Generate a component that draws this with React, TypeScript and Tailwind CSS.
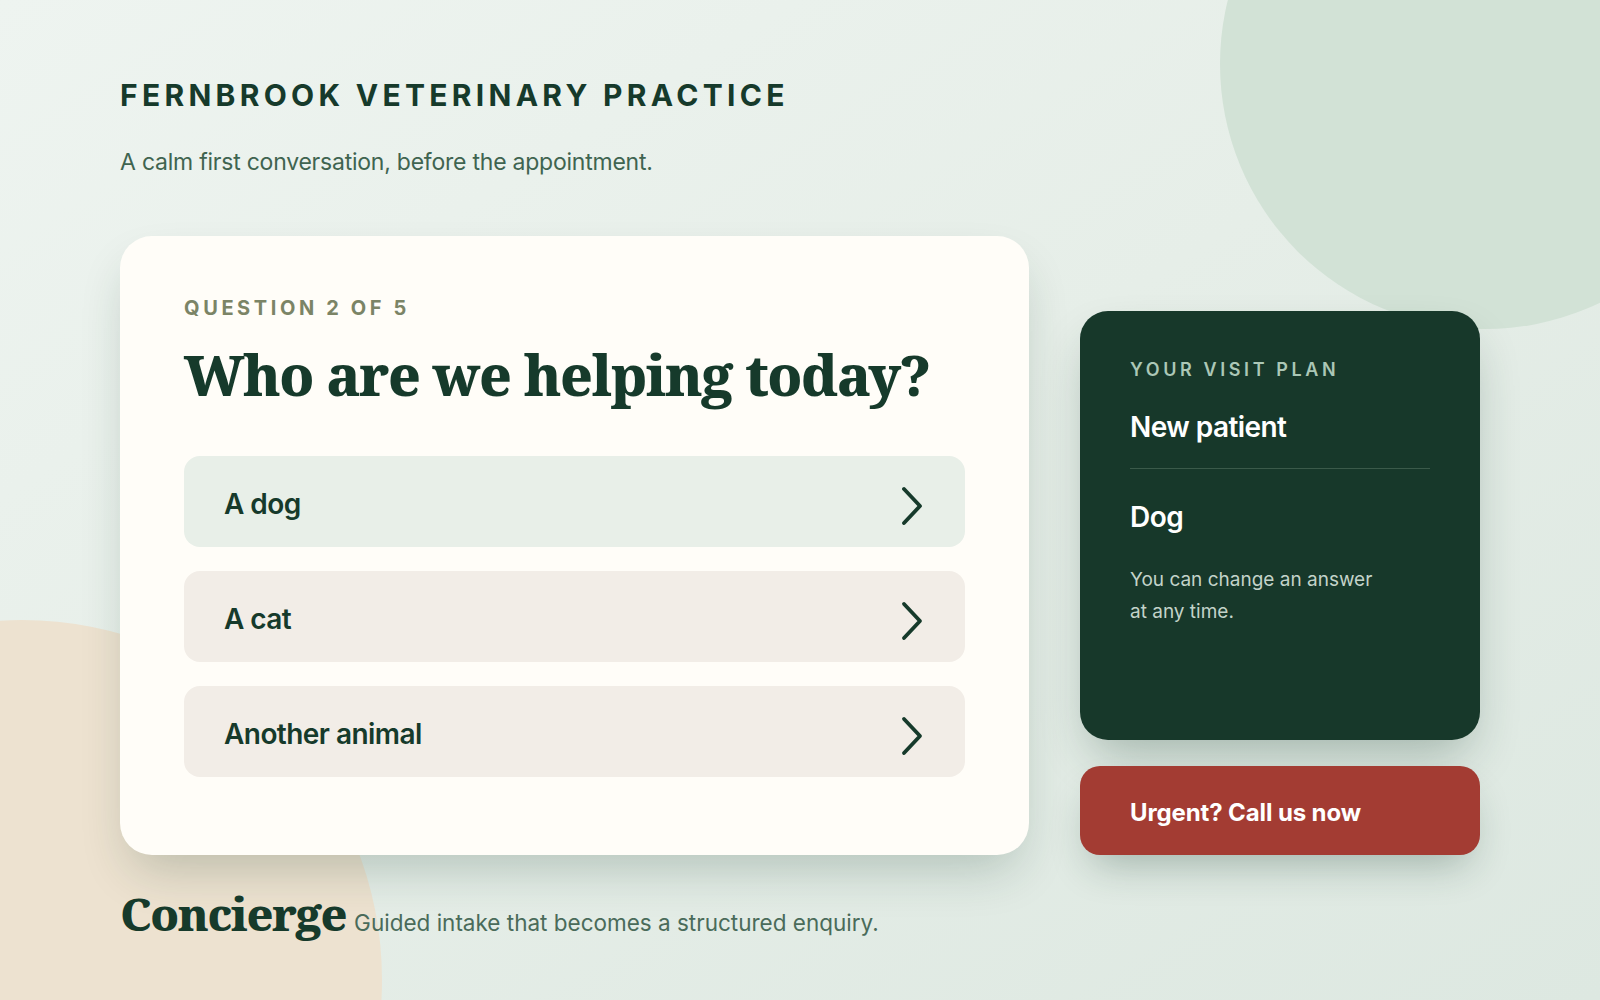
import React from 'react';

const sans = { fontFamily: 'Inter, "Noto Sans", sans-serif' };
const serif = { fontFamily: '"Noto Serif", "Liberation Serif", serif' };

const options = [
  { label: 'A dog', selected: true },
  { label: 'A cat', selected: false },
  { label: 'Another animal', selected: false },
];

const Chevron: React.FC = () => (
  <svg width="26" height="42" viewBox="0 0 26 42" fill="none" aria-hidden="true" className="mt-[9px]">
    <path d="M5 4 L21 21 L5 38" stroke="#163a2b" strokeWidth="3.8" strokeLinecap="round" strokeLinejoin="round" />
  </svg>
);

const App: React.FC = () => {
  return (
    <div
      className="relative w-full h-[1000px] overflow-hidden bg-gradient-to-br from-[#eef4f0] via-[#e6eee8] to-[#dde8e1] text-[#163a2b]"
      style={sans}
    >
      {/* Decorative blobs */}
      <div className="absolute left-[1220px] top-[-201px] w-[530px] h-[530px] rounded-full bg-[#d2e2d6]" />
      <div className="absolute left-[-338px] top-[620px] w-[720px] h-[720px] rounded-full bg-[#ede2d0]" />

      <div className="relative px-[120px] pt-[80px]">
        {/* Header */}
        <h1 className="text-[30px] leading-[30px] font-bold tracking-[0.143em] text-[#163a2b]">
          FERNBROOK VETERINARY PRACTICE
        </h1>
        <p className="mt-[36px] text-[23px] leading-[32px] tracking-[-0.01em] text-[#3f6450]">
          A calm first conversation, before the appointment.
        </p>

        {/* Main grid */}
        <div className="mt-[58px] grid grid-cols-[1fr_400px] gap-[51px] items-end">
          {/* Question card */}
          <div className="rounded-[32px] bg-[#fffdf8] pt-[60px] pb-[78px] px-16 shadow-[0_24px_50px_-12px_rgba(22,58,43,0.24)]">
            <div className="text-[20px] leading-[24px] font-bold tracking-[0.18em] text-[#7b8466]">
              QUESTION 2 OF 5
            </div>
            <h2
              className="mt-[22px] whitespace-nowrap text-[56px] leading-[64px] font-extrabold tracking-[-0.026em] text-[#163a2b]"
              style={serif}
            >
              Who are we helping today?
            </h2>
            <div className="mt-[50px] flex flex-col gap-6">
              {options.map((o) => (
                <button
                  key={o.label}
                  className={`flex items-center justify-between h-[91px] rounded-2xl pl-10 pr-[40px] text-left ${
                    o.selected ? 'bg-[#e8efe8]' : 'bg-[#f2ede7]'
                  }`}
                >
                  <span className="pt-[4px] text-[28px] font-semibold tracking-[-0.02em] text-[#163a2b]">{o.label}</span>
                  <Chevron />
                </button>
              ))}
            </div>
          </div>

          {/* Side column */}
          <div className="flex flex-col gap-[26px]">
            <div className="h-[429px] rounded-[28px] bg-[#17382a] px-[50px] pt-[47px] shadow-[0_24px_50px_-12px_rgba(22,58,43,0.32)]">
              <div className="text-[18px] leading-[24px] font-semibold tracking-[0.2em] text-[#abc7b6]">
                YOUR VISIT PLAN
              </div>
              <div className="mt-[27px] pb-[23px] border-b border-[#3b5a4a] text-[28px] leading-[36px] font-semibold tracking-[-0.02em] text-white">
                New patient
              </div>
              <div className="mt-[30px] text-[28px] leading-[36px] font-semibold tracking-[-0.02em] text-white">
                Dog
              </div>
              <p className="mt-[29px] max-w-[260px] text-[19px] leading-[32px] text-[#c3d3c9]">
                You can change an answer at any time.
              </p>
            </div>
            <button className="h-[89px] rounded-[20px] bg-[#a33c33] px-[50px] pt-[4px] text-left text-[24px] font-bold tracking-[-0.005em] text-white shadow-[0_20px_40px_-12px_rgba(22,58,43,0.32)]">
              Urgent? Call us now
            </button>
          </div>
        </div>

        {/* Footer */}
        <div className="mt-[30px] flex items-baseline gap-2">
          <span className="text-[46px] leading-[56px] font-extrabold tracking-[-0.03em] text-[#163a2b]" style={serif}>
            Concierge
          </span>
          <span className="text-[22.5px] text-[#4a6b5a]">
            Guided intake that becomes a structured enquiry.
          </span>
        </div>
      </div>
    </div>
  );
};

export default App;
